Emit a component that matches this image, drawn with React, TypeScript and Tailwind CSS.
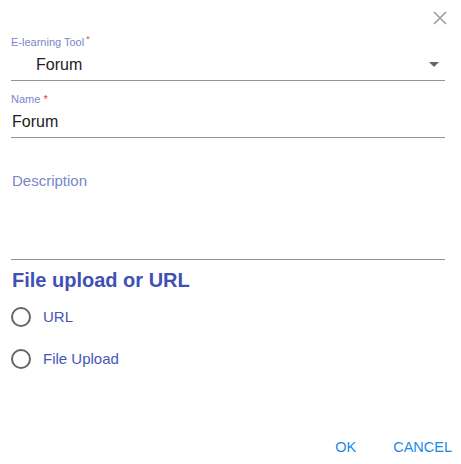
import React, { useState } from 'react';

const font = { fontFamily: '"Liberation Sans", Arial, sans-serif' };

function Radio({ label, checked, onClick }: { label: string; checked: boolean; onClick: () => void }) {
  return (
    <button type="button" onClick={onClick} className="flex items-center h-[42px] text-left">
      <span className="w-[20px] h-[20px] rounded-full border-2 border-[#666] ml-[11px] flex items-center justify-center">
        {checked && <span className="w-[10px] h-[10px] rounded-full bg-[#3f51b5]" />}
      </span>
      <span className="ml-[12px] text-[15px] text-[#4556b8]">{label}</span>
    </button>
  );
}

export default function App() {
  const [source, setSource] = useState<'url' | 'file' | null>(null);

  return (
    <div style={font} className="w-[461px] h-[464px] bg-white relative">
      <div className="h-[36px] flex justify-end items-start pt-[11px] pr-[14px]">
        <svg width="14" height="14" viewBox="0 0 14 14" className="text-[#9e9e9e]">
          <path d="M1 1 L13 13 M13 1 L1 13" stroke="currentColor" strokeWidth="1.6" />
        </svg>
      </div>

      <div className="pl-[11px] pr-[16px]">
        {/* e-learning tool select */}
        <div className="border-b border-[#949494] h-[45px]">
          <div className="text-[11px] leading-[13px] text-[#7986cb]">
            E-learning Tool<sup className="text-[#e53935] text-[9px] ml-[2px]">*</sup>
          </div>
          <div className="flex items-center justify-between h-[31px]">
            <span className="ml-[25px] text-[16px] text-[#212121]">Forum</span>
            <svg width="10" height="5" viewBox="0 0 10 5" className="mr-[6px]">
              <path d="M0 0 L10 0 L5 5 Z" fill="#666" />
            </svg>
          </div>
        </div>

        {/* name */}
        <div className="border-b border-[#949494] h-[57px] pt-[12px]">
          <div className="text-[11px] leading-[13px] text-[#7986cb]">
            Name <span className="text-[#e53935]">*</span>
          </div>
          <div className="h-[31px] flex items-center text-[16px] text-[#212121] pl-[1px]">Forum</div>
        </div>

        {/* description */}
        <div className="border-b border-[#949494] h-[122px] pt-[34px]">
          <div className="text-[15px] leading-[18px] text-[#7986cb] pl-[1px]">Description</div>
        </div>

        <h2 className="text-[20px] font-bold text-[#3f51b5] mt-[8px] leading-[24px] pl-[1px]">File upload or URL</h2>
      </div>

      <div className="mt-[4px] flex flex-col items-start">
        <Radio label="URL" checked={source === 'url'} onClick={() => setSource('url')} />
        <Radio label="File Upload" checked={source === 'file'} onClick={() => setSource('file')} />
      </div>

      <div className="absolute bottom-0 right-[5px] flex gap-[19px] text-[14.5px] text-[#1e88e5]">
        <button type="button" className="px-[14px] h-[32px]">OK</button>
        <button type="button" className="px-[4px] h-[32px]">CANCEL</button>
      </div>
    </div>
  );
}
